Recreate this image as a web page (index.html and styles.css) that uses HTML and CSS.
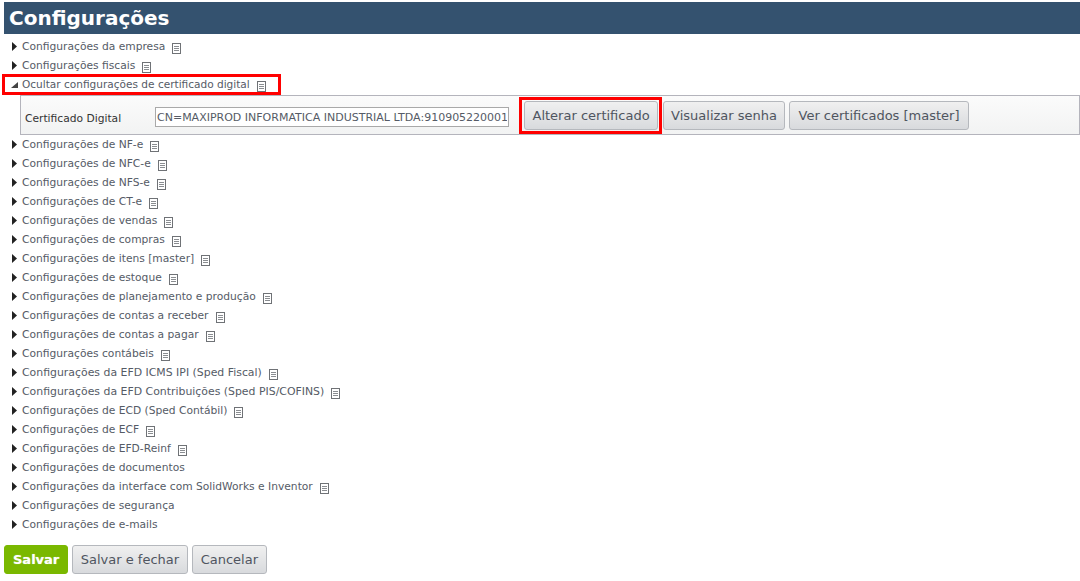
FILE: index.html
```html
<!DOCTYPE html>
<html lang="pt-BR">
<head>
<meta charset="utf-8">
<title>Configurações</title>
<link rel="stylesheet" href="styles.css">
</head>
<body>
<svg class="defs" width="0" height="0" aria-hidden="true">
  <symbol id="doc" viewBox="0 0 9 11">
    <path d="M.5.5h8v10h-8z" fill="#fff" stroke="#6f7276" shape-rendering="crispEdges"/>
    <path d="M2 3.5h5M2 5.5h5M2 7.5h5" stroke="#8a8d91" fill="none" shape-rendering="crispEdges"/>
  </symbol>
  <symbol id="closed" viewBox="0 0 5 9"><path d="M0 0l5 4.5L0 9z" fill="#222"/></symbol>
  <symbol id="open" viewBox="0 0 7 6"><path d="M7 0v6H0z" fill="#444"/></symbol>
</svg>
<h1 class="title">Configurações</h1>
<ul class="list">
  <li class="row"><svg class="arrow"><use href="#closed"/></svg><span>Configurações da empresa</span><svg class="doc"><use href="#doc"/></svg></li>
  <li class="row"><svg class="arrow"><use href="#closed"/></svg><span>Configurações fiscais</span><svg class="doc"><use href="#doc"/></svg></li>
  <li class="row row-open"><svg class="arrow-open"><use href="#open"/></svg><span>Ocultar configurações de certificado digital</span><svg class="doc"><use href="#doc"/></svg></li>
  <li class="panel">
    <label class="field-label" for="cert">Certificado Digital</label>
    <input id="cert" class="field" type="text" value="CN=MAXIPROD INFORMATICA INDUSTRIAL LTDA:910905220001">
    <span class="marked"><button class="btn btn-mid">Alterar certificado</button></span>
    <button class="btn btn-tight">Visualizar senha</button>
    <button class="btn btn-wide">Ver certificados [master]</button>
  </li>
  <li class="row"><svg class="arrow"><use href="#closed"/></svg><span>Configurações de NF-e</span><svg class="doc"><use href="#doc"/></svg></li>
  <li class="row"><svg class="arrow"><use href="#closed"/></svg><span>Configurações de NFC-e</span><svg class="doc"><use href="#doc"/></svg></li>
  <li class="row"><svg class="arrow"><use href="#closed"/></svg><span>Configurações de NFS-e</span><svg class="doc"><use href="#doc"/></svg></li>
  <li class="row"><svg class="arrow"><use href="#closed"/></svg><span>Configurações de CT-e</span><svg class="doc"><use href="#doc"/></svg></li>
  <li class="row"><svg class="arrow"><use href="#closed"/></svg><span>Configurações de vendas</span><svg class="doc"><use href="#doc"/></svg></li>
  <li class="row"><svg class="arrow"><use href="#closed"/></svg><span>Configurações de compras</span><svg class="doc"><use href="#doc"/></svg></li>
  <li class="row"><svg class="arrow"><use href="#closed"/></svg><span>Configurações de itens [master]</span><svg class="doc"><use href="#doc"/></svg></li>
  <li class="row"><svg class="arrow"><use href="#closed"/></svg><span>Configurações de estoque</span><svg class="doc"><use href="#doc"/></svg></li>
  <li class="row"><svg class="arrow"><use href="#closed"/></svg><span>Configurações de planejamento e produção</span><svg class="doc"><use href="#doc"/></svg></li>
  <li class="row"><svg class="arrow"><use href="#closed"/></svg><span>Configurações de contas a receber</span><svg class="doc"><use href="#doc"/></svg></li>
  <li class="row"><svg class="arrow"><use href="#closed"/></svg><span>Configurações de contas a pagar</span><svg class="doc"><use href="#doc"/></svg></li>
  <li class="row"><svg class="arrow"><use href="#closed"/></svg><span>Configurações contábeis</span><svg class="doc"><use href="#doc"/></svg></li>
  <li class="row row-caps"><svg class="arrow"><use href="#closed"/></svg><span>Configurações da EFD ICMS IPI (Sped Fiscal)</span><svg class="doc"><use href="#doc"/></svg></li>
  <li class="row row-caps"><svg class="arrow"><use href="#closed"/></svg><span>Configurações da EFD Contribuições (Sped PIS/COFINS)</span><svg class="doc"><use href="#doc"/></svg></li>
  <li class="row"><svg class="arrow"><use href="#closed"/></svg><span>Configurações de ECD (Sped Contábil)</span><svg class="doc"><use href="#doc"/></svg></li>
  <li class="row"><svg class="arrow"><use href="#closed"/></svg><span>Configurações de ECF</span><svg class="doc"><use href="#doc"/></svg></li>
  <li class="row"><svg class="arrow"><use href="#closed"/></svg><span>Configurações de EFD-Reinf</span><svg class="doc"><use href="#doc"/></svg></li>
  <li class="row"><svg class="arrow"><use href="#closed"/></svg><span>Configurações de documentos</span></li>
  <li class="row"><svg class="arrow"><use href="#closed"/></svg><span>Configurações da interface com SolidWorks e Inventor</span><svg class="doc"><use href="#doc"/></svg></li>
  <li class="row"><svg class="arrow"><use href="#closed"/></svg><span>Configurações de segurança</span></li>
  <li class="row"><svg class="arrow"><use href="#closed"/></svg><span>Configurações de e-mails</span></li>
</ul>
<div class="actions">
  <button class="btn btn-save">Salvar</button>
  <button class="btn btn-mid">Salvar e fechar</button>
  <button class="btn">Cancelar</button>
</div>
</body>
</html>
```
FILE: styles.css
```css
* { box-sizing: border-box; }
html, body { margin: 0; padding: 0; }
body {
  background: #fff;
  font-family: "DejaVu Sans", Verdana, sans-serif;
  font-size: 10.7px;
  color: #555b66;
  overflow: hidden;
  height: 581px;
  padding-top: 2px;
}
.defs { position: absolute; }
.title {
  margin: 0 0 0 4px;
  height: 32px;
  line-height: 32px;
  padding-left: 5px;
  background: #34526f;
  color: #fff;
  font-size: 20px;
  font-weight: bold;
}
.list { list-style: none; margin: 3px 0 0; padding: 0; }
.row {
  display: flex;
  align-items: center;
  height: 19px;
  padding-left: 12px;
  white-space: nowrap;
}
.row-caps { font-size: 10.9px; }
.arrow { width: 5px; height: 9px; margin-right: 5px; flex: none; }
.arrow-open { width: 7px; height: 6px; margin-right: 4px; flex: none; }
.doc { width: 9px; height: 11px; margin: 4px 0 0 7px; flex: none; }
.row-open {
  position: relative;
  z-index: 1;
  width: 277px;
  margin-left: 3px;
  padding-left: 8px;
  font-size: 10.56px;
  outline: 3px solid #f00;
  outline-offset: -2px;
}
.row-open span { margin-bottom: 2px; }
.panel {
  display: flex;
  align-items: center;
  height: 40px;
  margin: 1px 0 0 20px;
  padding: 1px 0 0 4px;
  border: 1px solid #b4b4bc;
  background: linear-gradient(#fbfbfb, #f2f3f3);
}
.field-label { width: 130px; color: #333; padding-top: 5px; }
.field {
  width: 354px;
  height: 20px;
  margin-top: 3px;
  padding: 0 1px;
  border: 1px solid #a9a9a9;
  background: #fff;
  color: #555b66;
  font: 11px "DejaVu Sans", Verdana, sans-serif;
}
.btn {
  height: 29px;
  padding: 0 8px;
  border: 1px solid #b5b8bd;
  border-radius: 3px;
  background: linear-gradient(#f0f0f0, #d8dadd);
  color: #4f5560;
  font: 13px "DejaVu Sans", Verdana, sans-serif;
  white-space: nowrap;
}
.btn-mid { padding: 0 7.5px; }
.btn-tight { padding: 0 7px; margin-left: 1px; }
.btn-wide { padding: 0 8.5px; margin-left: 4px; }
.marked {
  display: flex;
  margin: 0 0 0 10px;
  padding: 1px 1px 1px 2px;
  border: 3px solid #f00;
}
.actions { display: flex; gap: 4px; margin: 11px 0 0 4px; }
.btn-save {
  background: #7ab800;
  border-color: #7ab800;
  color: #fff;
  font-weight: bold;
  text-shadow: 0 0 1px rgba(255, 255, 255, .6);
}
```
